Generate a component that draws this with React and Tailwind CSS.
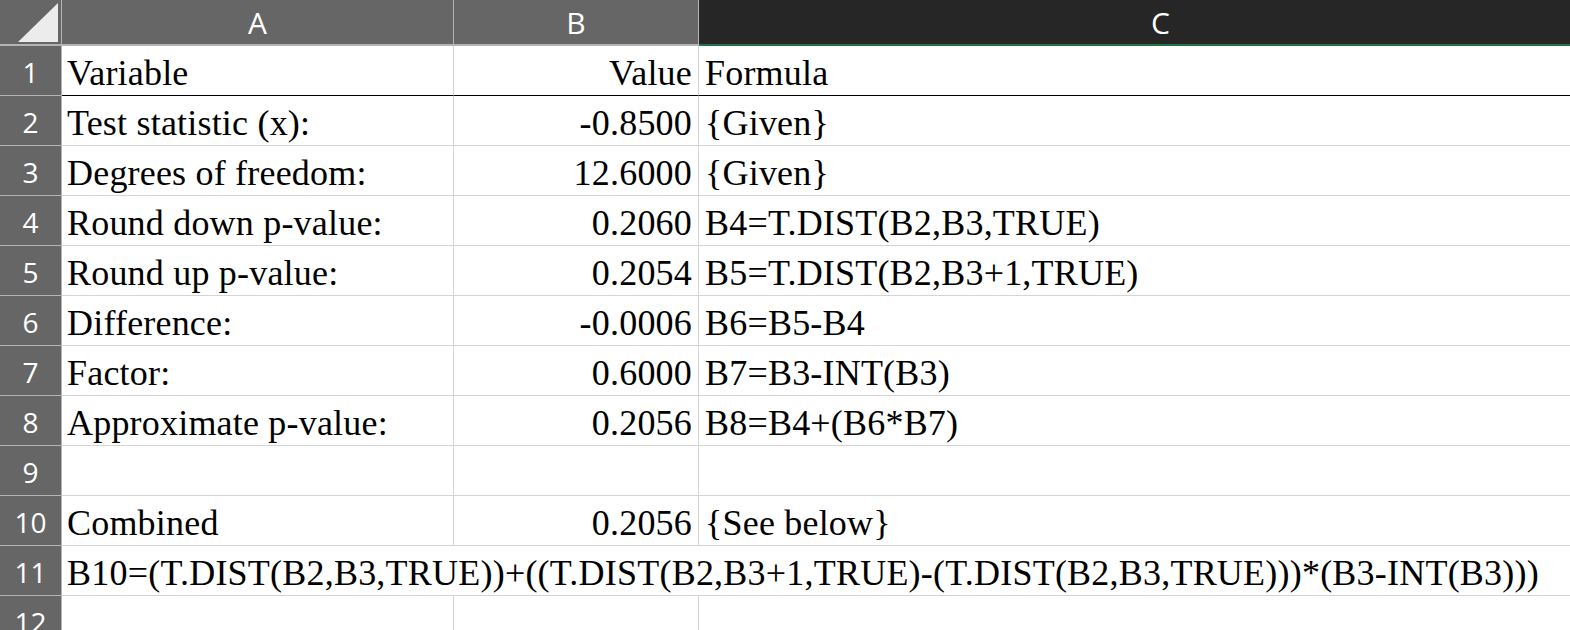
import React from "react";

const rows = [
  ["Variable", "Value", "Formula"],
  ["Test statistic (x):", "-0.8500", "{Given}"],
  ["Degrees of freedom:", "12.6000", "{Given}"],
  ["Round down p-value:", "0.2060", "B4=T.DIST(B2,B3,TRUE)"],
  ["Round up p-value:", "0.2054", "B5=T.DIST(B2,B3+1,TRUE)"],
  ["Difference:", "-0.0006", "B6=B5-B4"],
  ["Factor:", "0.6000", "B7=B3-INT(B3)"],
  ["Approximate p-value:", "0.2056", "B8=B4+(B6*B7)"],
  ["", "", ""],
  ["Combined", "0.2056", "{See below}"],
];

const serif = { fontFamily: '"Liberation Serif", "Times New Roman", serif' };
const sans = { fontFamily: '"Open Sans", "Noto Sans", sans-serif' };

function RowHead({ n }) {
  return (
    <div
      className="w-[62px] shrink-0 h-full flex items-center justify-center bg-[#666666] text-white text-[28px] border-r border-r-[#b4b4b4] border-b border-b-[#b4b4b4]"
      style={sans}
    >
      <span className="pt-[3px]">{n}</span>
    </div>
  );
}

export default function App() {
  return (
    <div className="w-[1570px] h-[630px] overflow-hidden bg-white text-black">
      {/* header row */}
      <div className="flex h-[46px]">
        <div className="w-[62px] shrink-0 h-full bg-[#666666] border-r border-r-[#b4b4b4] border-b-2 border-b-[#b4b4b4] relative">
          <svg width="61" height="44" className="absolute left-0 top-0">
            <polygon points="18,42 58,42 58,3" fill="#ececec" />
          </svg>
        </div>
        <div
          className="w-[392px] shrink-0 h-full flex items-center justify-center bg-[#666666] text-white text-[30px] border-r border-r-[#b4b4b4] border-b-2 border-b-[#b4b4b4]"
          style={sans}
        >
          A
        </div>
        <div
          className="w-[245px] shrink-0 h-full flex items-center justify-center bg-[#666666] text-white text-[30px] border-r border-r-[#b4b4b4] border-b-2 border-b-[#b4b4b4]"
          style={sans}
        >
          B
        </div>
        <div
          className="flex-1 h-full flex items-center justify-center pl-[52px] bg-[#262626] text-white text-[30px] border-b-2 border-b-[#217346]"
          style={sans}
        >
          C
        </div>
      </div>

      {rows.map((r, i) => {
        const first = i === 0;
        const bottom = first ? "border-b border-b-black" : "border-b border-b-[#d4d4d4]";
        return (
          <div key={i} className="flex h-[50px]">
            <RowHead n={i + 1} />
            <div
              className={`w-[392px] shrink-0 h-full flex items-end pl-[5px] pb-[4px] text-[36px] leading-[36px] tracking-[0.2px] whitespace-nowrap border-r border-r-[#d4d4d4] ${bottom}`}
              style={serif}
            >
              {r[0]}
            </div>
            <div
              className={`w-[245px] shrink-0 h-full flex items-end justify-end pr-[6px] pb-[4px] text-[36px] leading-[36px] tracking-[0.2px] whitespace-nowrap border-r border-r-[#d4d4d4] ${bottom}`}
              style={serif}
            >
              {r[1]}
            </div>
            <div
              className={`flex-1 h-full flex items-end pl-[6px] pb-[4px] text-[36px] leading-[36px] tracking-[0.2px] whitespace-nowrap ${bottom}`}
              style={serif}
            >
              {r[2]}
            </div>
          </div>
        );
      })}

      {/* row 11 overflow text */}
      <div className="flex h-[50px]">
        <RowHead n={11} />
        <div
          className="flex-1 h-full flex items-end pl-[5px] pb-[4px] text-[36px] leading-[36px] tracking-[0.22px] whitespace-nowrap border-b border-b-[#d4d4d4]"
          style={serif}
        >
          B10=(T.DIST(B2,B3,TRUE))+((T.DIST(B2,B3+1,TRUE)-(T.DIST(B2,B3,TRUE)))*(B3-INT(B3)))
        </div>
      </div>

      {/* row 12 */}
      <div className="flex h-[50px]">
        <RowHead n={12} />
        <div className="w-[392px] shrink-0 h-full border-r border-r-[#d4d4d4] border-b border-b-[#d4d4d4]" />
        <div className="w-[245px] shrink-0 h-full border-r border-r-[#d4d4d4] border-b border-b-[#d4d4d4]" />
        <div className="flex-1 h-full border-b border-b-[#d4d4d4]" />
      </div>
    </div>
  );
}
